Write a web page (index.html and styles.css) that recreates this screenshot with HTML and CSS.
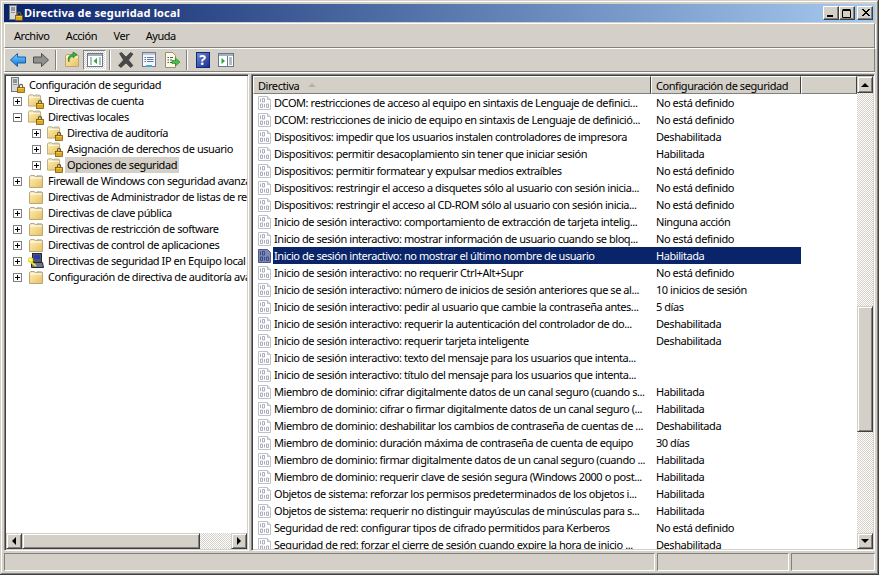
FILE: index.html
```html
<!doctype html>
<html lang="es">
<head>
<meta charset="utf-8">
<title>Directiva de seguridad local</title>
<link rel="stylesheet" href="styles.css">
</head>

<body>
<!--iconos-->
<svg class="defs" width="0" height="0">
	<defs>
		<linearGradient id="g-title" x1="0" y1="0" x2="1" y2="1"><stop offset="0" stop-color="#fff0b8"/><stop offset="1" stop-color="#e8c060"/></linearGradient>
		<linearGradient id="g-back" x1="0" y1="0" x2="0" y2="1"><stop offset="0" stop-color="#7fd0ff"/><stop offset="1" stop-color="#1070d8"/></linearGradient>
		<symbol id="i-folder" viewBox="0 0 16 16">
			<path d="M1.5 14.5V3.5L3 2.5H6L7.5 3.5H14.5V14.5Z" fill="url(#g-title)" stroke="#b8a878"/>
			<path d="M2 5H14" stroke="#fff" />
			<path d="M9 2.5H13.5V3.5H9Z" fill="#e8e0c0" stroke="#a8a8a0" stroke-width=".6"/>
		</symbol>
		<symbol id="i-lock" viewBox="0 0 16 16">
			<path d="M5.5 7V4.5C5.5 1.5 10.5 1.5 10.5 4.5V7" fill="none" stroke="#6c6040" stroke-width="1.8"/>
			<rect x="2.5" y="7" width="11" height="8" fill="#e0a818" stroke="#705008" stroke-width="1.2"/>
			<path d="M4 8.8H12" stroke="#f8e080"/>
		</symbol>
		<symbol id="i-folder-lock" viewBox="0 0 16 16">
			<use href="#i-folder" width="15" height="16" x="-1" y="-1"/>
			<use href="#i-lock" x="7" y="6" width="10" height="10"/>
		</symbol>
		<symbol id="i-server" viewBox="0 0 16 16">
			<rect x="1.5" y="0.5" width="7" height="14" fill="#d8d8d8" stroke="#707880"/>
			<path d="M3 3H7M3 5H7" stroke="#485058"/>
			<rect x="3" y="7" width="4" height="1" fill="#909090"/>
			<use href="#i-lock" x="6" y="6" width="10" height="10"/>
		</symbol>
		<symbol id="i-ipsec" viewBox="0 0 16 16">
			<rect x="4.5" y="0.5" width="9" height="9" fill="#505868" stroke="#202838"/>
			<rect x="6" y="2" width="6" height="4" fill="#2838b8"/>
			<path d="M3.5 9.5H14.5L15.5 14.5H3.5Z" fill="#707888" stroke="#202838"/>
			<path d="M1 7.5L8 13" stroke="#f4e020" stroke-width="2"/>
			<circle cx="2.5" cy="7" r="2" fill="none" stroke="#f4e020" stroke-width="1.4"/>
		</symbol>
		<symbol id="i-doc" viewBox="0 0 16 16">
			<path d="M1.5 1.5H10.5L13.5 4.5V14.5H1.5Z" fill="#fff" stroke="#c0c0c8"/>
			<path d="M10.5 1.5V4.5H13.5" fill="#e0e0e0" stroke="#c0c0c8"/>
			<path d="M3.5 3.5V7M5.5 3.5H7.5V7H5.5ZM3.5 9H5.5V12.5H3.5ZM7.5 9V12.5M9.5 9H11.5V12.5H9.5Z" fill="none" stroke="#a8aebc"/>
		</symbol>
		<symbol id="i-doc-sel" viewBox="0 0 16 16">
			<path d="M1.5 1.5H10.5L13.5 4.5V14.5H1.5Z" fill="#7c88b0" stroke="#4a5a90"/>
			<path d="M3.5 3.5V7M5.5 3.5H7.5V7H5.5ZM3.5 9H5.5V12.5H3.5ZM7.5 9V12.5M9.5 9H11.5V12.5H9.5Z" fill="none" stroke="#384888"/>
		</symbol>
	</defs>
</svg>

<div class="window">
	<!--barra de titulo-->
	<div class="titlebar">
		<svg class="title-icon" width="16" height="16"><use href="#i-server"/></svg>
		<span class="title-text">Directiva de seguridad local</span>
		<div class="caption-btns">
			<button class="caption-btn"><svg width="8" height="8"><rect x="0" y="6" width="6" height="2" fill="#000"/></svg></button>
			<button class="caption-btn"><svg width="10" height="9"><path d="M.5 1.5H8.5V8.5H.5Z M.5 .5H8.5" fill="none" stroke="#000"/></svg></button>
			<button class="caption-btn close"><svg width="9" height="8"><path d="M1 0L8 7M2 0L9 7M8 0L1 7M9 0L2 7" stroke="#000" fill="none"/></svg></button>
		</div>
	</div>

	<!--menu-->
	<div class="menubar">
		<span>Archivo</span>
		<span>Acción</span>
		<span>Ver</span>
		<span>Ayuda</span>
	</div>

	<!--botones-->
	<div class="toolbar">
		<div class="tool"><svg width="16" height="16" viewBox="0 0 16 16"><path d="M.5 8L7.5 1.5V5H15.5V11H7.5V14.5Z" fill="url(#g-back)" stroke="#1060b0"/></svg></div>
		<div class="tool"><svg width="16" height="16" viewBox="0 0 16 16"><path d="M15.5 8L8.5 1.5V5H.5V11H8.5V14.5Z" fill="#909090" stroke="#505050"/></svg></div>
		<div class="tool-sep"></div>
		<div class="tool"><svg width="16" height="16" viewBox="0 0 16 16"><use href="#i-folder"/><path d="M5 10C5 6 7 5 9 4V6L13 2.5L9 0V2C5 3 3 6 5 10Z" fill="#38b030" stroke="#187018" stroke-width=".6"/></svg></div>
		<div class="tool pressed"><svg width="16" height="16" viewBox="0 0 16 16"><rect x=".5" y="1.5" width="15" height="13" fill="#fff" stroke="#68788c"/><rect x="1" y="2" width="14" height="2" fill="#a0b0c0"/><path d="M3 6H5M3 8H5M3 10H5M3 12H5M12 6H14M12 8H14M12 10H14M12 12H14" stroke="#68788c"/><path d="M10 6V12L6.5 9Z" fill="#28a838"/></svg></div>
		<div class="tool-sep"></div>
		<div class="tool"><svg width="16" height="16" viewBox="0 0 16 16"><path d="M1.5 1.5L3.5 .5L8 5L12.5 .5L15 2L10.5 8L15 13.5L12.5 15.5L8 11L3 15.5L.5 13.5L5.5 8Z" fill="#484848" stroke="#303030" stroke-width=".6"/></svg></div>
		<div class="tool"><svg width="16" height="16" viewBox="0 0 16 16"><rect x="1.5" y=".5" width="13" height="14" fill="#f4f6fa" stroke="#707c90"/><rect x="2" y="1" width="12" height="2" fill="#c0c8d8"/><path d="M3.5 5.5H5M6 5.5H12.5M3.5 7.5H5M6 7.5H12.5M3.5 9.5H5M6 9.5H12.5" stroke="#5878a8"/><rect x="5" y="13" width="6" height="2" fill="#40a8e0"/></svg></div>
		<div class="tool"><svg width="16" height="16" viewBox="0 0 16 16"><path d="M1.5 .5H8.5L11.5 3.5V15.5H1.5Z" fill="#fbf8e4" stroke="#989078"/><path d="M3.5 5.5H5M6 5.5H9M3.5 8H5M6 8H8M3.5 10.5H5M6 10.5H8" stroke="#505860"/><path d="M8 8.5H11.5V6L16 10L11.5 14V11.5H8Z" fill="#48c048" stroke="#208030" stroke-width=".6"/></svg></div>
		<div class="tool-sep"></div>
		<div class="tool"><div class="help-mark">?</div></div>
		<div class="tool"><svg width="16" height="16" viewBox="0 0 16 16"><rect x=".5" y="1.5" width="15" height="13" fill="#fff" stroke="#68788c"/><rect x="1" y="2" width="14" height="2" fill="#a0b0c0"/><path d="M11 6H14M11 8H14M11 10H14M11 12H14M9.5 4V14" stroke="#68788c"/><path d="M3.5 6V12L7 9Z" fill="#28a838"/></svg></div>
	</div>

	<div class="panes">
		<!--arbol-->
		<div class="pane tree-pane">
			<div class="tree">
				<div class="node root"><svg width="16" height="16"><use href="#i-server"/></svg><span>Configuración de seguridad</span></div>
				<div class="node"><i class="exp"></i><svg width="16" height="16"><use href="#i-folder-lock"/></svg><span>Directivas de cuenta</span></div>
				<div class="node"><i class="exp open"></i><svg width="16" height="16"><use href="#i-folder-lock"/></svg><span>Directivas locales</span></div>
				<div class="node sub"><i class="exp"></i><svg width="16" height="16"><use href="#i-folder-lock"/></svg><span>Directiva de auditoría</span></div>
				<div class="node sub"><i class="exp"></i><svg width="16" height="16"><use href="#i-folder-lock"/></svg><span>Asignación de derechos de usuario</span></div>
				<div class="node sub current"><i class="exp"></i><svg width="16" height="16"><use href="#i-folder-lock"/></svg><span>Opciones de seguridad</span></div>
				<div class="node"><i class="exp"></i><svg width="16" height="16"><use href="#i-folder"/></svg><span>Firewall de Windows con seguridad avanzada</span></div>
				<div class="node"><i class="exp none"></i><svg width="16" height="16"><use href="#i-folder"/></svg><span>Directivas de Administrador de listas de redes</span></div>
				<div class="node"><i class="exp"></i><svg width="16" height="16"><use href="#i-folder"/></svg><span>Directivas de clave pública</span></div>
				<div class="node"><i class="exp"></i><svg width="16" height="16"><use href="#i-folder"/></svg><span>Directivas de restricción de software</span></div>
				<div class="node"><i class="exp"></i><svg width="16" height="16"><use href="#i-folder"/></svg><span>Directivas de control de aplicaciones</span></div>
				<div class="node"><i class="exp"></i><svg width="16" height="16"><use href="#i-ipsec"/></svg><span>Directivas de seguridad IP en Equipo local</span></div>
				<div class="node"><i class="exp"></i><svg width="16" height="16"><use href="#i-folder"/></svg><span>Configuración de directiva de auditoría avanzada</span></div>
			</div>
			<div class="hscroll">
				<div class="sb-btn"><b class="arrow left"></b></div>
				<div class="sb-thumb hthumb"></div>
				<div class="sb-track"></div>
				<div class="sb-btn"><b class="arrow right"></b></div>
			</div>
		</div>

		<!--lista-->
		<div class="pane list-pane">
			<div class="list">
				<div class="list-head">
					<div class="head-cell col-name">Directiva <b class="sort"></b></div>
					<div class="head-cell col-value">Configuración de seguridad</div>
					<div class="head-cell col-rest"></div>
				</div>
				<div class="row"><svg width="16" height="16"><use href="#i-doc"/></svg><span class="name">DCOM: restricciones de acceso al equipo en sintaxis de Lenguaje de definici...</span><span class="value">No está definido</span></div>
				<div class="row"><svg width="16" height="16"><use href="#i-doc"/></svg><span class="name">DCOM: restricciones de inicio de equipo en sintaxis de Lenguaje de definició...</span><span class="value">No está definido</span></div>
				<div class="row"><svg width="16" height="16"><use href="#i-doc"/></svg><span class="name">Dispositivos: impedir que los usuarios instalen controladores de impresora</span><span class="value">Deshabilitada</span></div>
				<div class="row"><svg width="16" height="16"><use href="#i-doc"/></svg><span class="name">Dispositivos: permitir desacoplamiento sin tener que iniciar sesión</span><span class="value">Habilitada</span></div>
				<div class="row"><svg width="16" height="16"><use href="#i-doc"/></svg><span class="name">Dispositivos: permitir formatear y expulsar medios extraíbles</span><span class="value">No está definido</span></div>
				<div class="row"><svg width="16" height="16"><use href="#i-doc"/></svg><span class="name">Dispositivos: restringir el acceso a disquetes sólo al usuario con sesión inicia...</span><span class="value">No está definido</span></div>
				<div class="row"><svg width="16" height="16"><use href="#i-doc"/></svg><span class="name">Dispositivos: restringir el acceso al CD-ROM sólo al usuario con sesión inicia...</span><span class="value">No está definido</span></div>
				<div class="row"><svg width="16" height="16"><use href="#i-doc"/></svg><span class="name">Inicio de sesión interactivo: comportamiento de extracción de tarjeta intelig...</span><span class="value">Ninguna acción</span></div>
				<div class="row"><svg width="16" height="16"><use href="#i-doc"/></svg><span class="name">Inicio de sesión interactivo: mostrar información de usuario cuando se bloq...</span><span class="value">No está definido</span></div>
				<div class="row selected"><svg width="16" height="16"><use href="#i-doc-sel"/></svg><div class="sel-band"><span class="name">Inicio de sesión interactivo: no mostrar el último nombre de usuario</span><span class="value">Habilitada</span></div></div>
				<div class="row"><svg width="16" height="16"><use href="#i-doc"/></svg><span class="name">Inicio de sesión interactivo: no requerir Ctrl+Alt+Supr</span><span class="value">No está definido</span></div>
				<div class="row"><svg width="16" height="16"><use href="#i-doc"/></svg><span class="name">Inicio de sesión interactivo: número de inicios de sesión anteriores que se al...</span><span class="value">10 inicios de sesión</span></div>
				<div class="row"><svg width="16" height="16"><use href="#i-doc"/></svg><span class="name">Inicio de sesión interactivo: pedir al usuario que cambie la contraseña antes...</span><span class="value">5 días</span></div>
				<div class="row"><svg width="16" height="16"><use href="#i-doc"/></svg><span class="name">Inicio de sesión interactivo: requerir la autenticación del controlador de do...</span><span class="value">Deshabilitada</span></div>
				<div class="row"><svg width="16" height="16"><use href="#i-doc"/></svg><span class="name">Inicio de sesión interactivo: requerir tarjeta inteligente</span><span class="value">Deshabilitada</span></div>
				<div class="row"><svg width="16" height="16"><use href="#i-doc"/></svg><span class="name">Inicio de sesión interactivo: texto del mensaje para los usuarios que intenta...</span><span class="value"></span></div>
				<div class="row"><svg width="16" height="16"><use href="#i-doc"/></svg><span class="name">Inicio de sesión interactivo: título del mensaje para los usuarios que intenta...</span><span class="value"></span></div>
				<div class="row"><svg width="16" height="16"><use href="#i-doc"/></svg><span class="name">Miembro de dominio: cifrar digitalmente datos de un canal seguro (cuando s...</span><span class="value">Habilitada</span></div>
				<div class="row"><svg width="16" height="16"><use href="#i-doc"/></svg><span class="name">Miembro de dominio: cifrar o firmar digitalmente datos de un canal seguro (...</span><span class="value">Habilitada</span></div>
				<div class="row"><svg width="16" height="16"><use href="#i-doc"/></svg><span class="name">Miembro de dominio: deshabilitar los cambios de contraseña de cuentas de ...</span><span class="value">Deshabilitada</span></div>
				<div class="row"><svg width="16" height="16"><use href="#i-doc"/></svg><span class="name">Miembro de dominio: duración máxima de contraseña de cuenta de equipo</span><span class="value">30 días</span></div>
				<div class="row"><svg width="16" height="16"><use href="#i-doc"/></svg><span class="name">Miembro de dominio: firmar digitalmente datos de un canal seguro (cuando ...</span><span class="value">Habilitada</span></div>
				<div class="row"><svg width="16" height="16"><use href="#i-doc"/></svg><span class="name">Miembro de dominio: requerir clave de sesión segura (Windows 2000 o post...</span><span class="value">Habilitada</span></div>
				<div class="row"><svg width="16" height="16"><use href="#i-doc"/></svg><span class="name">Objetos de sistema: reforzar los permisos predeterminados de los objetos i...</span><span class="value">Habilitada</span></div>
				<div class="row"><svg width="16" height="16"><use href="#i-doc"/></svg><span class="name">Objetos de sistema: requerir no distinguir mayúsculas de minúsculas para s...</span><span class="value">Habilitada</span></div>
				<div class="row"><svg width="16" height="16"><use href="#i-doc"/></svg><span class="name">Seguridad de red: configurar tipos de cifrado permitidos para Kerberos</span><span class="value">No está definido</span></div>
				<div class="row"><svg width="16" height="16"><use href="#i-doc"/></svg><span class="name">Seguridad de red: forzar el cierre de sesión cuando expire la hora de inicio ...</span><span class="value">Deshabilitada</span></div>
			</div>
			<div class="vscroll">
				<div class="sb-btn tall"><b class="arrow up"></b></div>
				<div class="sb-track vtop"></div>
				<div class="sb-thumb vthumb"></div>
				<div class="sb-track"></div>
				<div class="sb-btn"><b class="arrow down"></b></div>
			</div>
		</div>
	</div>

	<!--estado-->
	<div class="statusbar">
		<div class="status-cell s1"></div>
		<div class="status-cell s2"></div>
		<div class="status-cell s3"></div>
	</div>
</div>
</body>
</html>
```

FILE: styles.css
```css
html, body {
	margin: 0;
	padding: 0;
}

body {
	font-family: "Noto Sans", "DejaVu Sans", sans-serif;
	font-size: 11px;
	letter-spacing: -0.44px;
	color: #000;
}

.defs {
	display: block;
	height: 0;
}

svg {
	display: block;
	flex: none;
}

.window {
	box-sizing: border-box;
	width: 879px;
	height: 575px;
	padding: 4px;
	display: flex;
	flex-direction: column;
	background: #d4d0c8;
	box-shadow: inset -1px -1px #404040, inset 1px 1px #d4d0c8, inset -2px -2px #808080, inset 2px 2px #fff;
}

/* barra de titulo */
.titlebar {
	height: 18px;
	flex: none;
	padding: 0 2px 0 4px;
	display: flex;
	align-items: center;
	color: #fff;
	background: linear-gradient(to right, #0a246a, #a6caf0);
}

.title-icon {
	margin-top: -1px;
}

.title-text {
	margin-top: -1px;
	font-weight: bold;
	letter-spacing: 0.15px;
	flex: 1;
}

.caption-btns {
	display: flex;
}

.caption-btn {
	box-sizing: border-box;
	width: 16px;
	height: 14px;
	padding: 0;
	display: flex;
	align-items: center;
	justify-content: center;
	background: #d4d0c8;
	border: 1px solid;
	border-color: #fff #404040 #404040 #fff;
	box-shadow: inset -1px -1px #808080;
}

.caption-btn.close {
	margin-left: 2px;
}

/* menu y botones */
.menubar {
	box-sizing: border-box;
	height: 25px;
	flex: none;
	margin-top: 1px;
	padding-left: 9px;
	display: flex;
	align-items: center;
	gap: 16.4px;
	border: 1px solid;
	border-color: #fff #808080 #808080 #fff;
	box-shadow: 1px 1px #fff;
}

.toolbar {
	box-sizing: border-box;
	height: 24px;
	flex: none;
	padding: 1px 0 0 1px;
	display: flex;
	border: 1px solid;
	border-color: #fff #808080 #808080 #fff;
	box-shadow: 0 1px #fff;
}

.tool {
	width: 23px;
	height: 20px;
	display: flex;
	align-items: center;
	justify-content: center;
}

.tool.pressed {
	box-sizing: border-box;
	background: repeating-conic-gradient(#d4d0c8 0 25%, #fff 0 50%) 0 0 / 2px 2px;
	border: 1px solid;
	border-color: #808080 #fff #fff #808080;
}

.tool-sep {
	box-sizing: border-box;
	width: 2px;
	height: 20px;
	margin: 0 3px;
	border-left: 1px solid #808080;
	border-right: 1px solid #fff;
}

.help-mark {
	box-sizing: border-box;
	width: 14px;
	height: 16px;
	line-height: 14px;
	text-align: center;
	font-size: 14px;
	font-weight: bold;
	letter-spacing: 0;
	color: #fff;
	background: linear-gradient(135deg, #6c88d8, #18308c);
	border: 1px solid #102878;
}

/* paneles */
.panes {
	flex: 1;
	min-height: 0;
	margin-top: 2px;
	display: flex;
	gap: 2px;
}

.pane {
	box-sizing: border-box;
	min-height: 0;
	border: 1px solid;
	border-color: #808080 #fff #fff #808080;
	box-shadow: inset 1px 1px #404040, inset -1px -1px #d4d0c8;
	padding: 1px;
	display: flex;
	background: #fff;
}

.tree-pane {
	width: 245px;
	flex-direction: column;
}

.list-pane {
	flex: 1;
}

/* arbol */
.tree {
	flex: 1;
	min-height: 0;
	padding-top: 1px;
	overflow: hidden;
}

.node {
	height: 16px;
	padding-left: 7px;
	display: flex;
	align-items: center;
	white-space: nowrap;
}

.node.root {
	padding-left: 4px;
}

.node.root span {
	margin-left: 1px;
}

.node.sub {
	padding-left: 26px;
}

.node span {
	margin-left: 2px;
	padding: 0 2px;
	line-height: 16px;
}

.node.current span {
	background: #d4d0c8;
}

.exp {
	box-sizing: border-box;
	width: 9px;
	height: 9px;
	margin-right: 6px;
	flex: none;
	border: 1px solid #808080;
	background: linear-gradient(#000, #000) center / 5px 1px no-repeat, linear-gradient(#000, #000) center / 1px 5px no-repeat;
}

.exp.open {
	background: linear-gradient(#000, #000) center / 5px 1px no-repeat;
}

.exp.none {
	border: 0;
	background: none;
}

/* lista */
.list {
	flex: 1;
	min-width: 0;
	overflow: hidden;
}

.list-head {
	height: 18px;
	display: flex;
}

.head-cell {
	box-sizing: border-box;
	height: 18px;
	padding-left: 4px;
	line-height: 17px;
	white-space: nowrap;
	background: #d4d0c8;
	border: 1px solid;
	border-color: #fff #404040 #808080 #fff;
}

.col-name {
	width: 398px;
	display: flex;
	align-items: center;
	gap: 9px;
}

.col-value {
	width: 150px;
}

.col-rest {
	flex: 1;
}

.sort {
	width: 0;
	height: 0;
	border-left: 4px solid transparent;
	border-right: 4px solid transparent;
	border-bottom: 4px solid #b4b0a8;
}

.row {
	height: 17px;
	padding-left: 4px;
	display: flex;
	align-items: center;
	white-space: nowrap;
}

.name {
	box-sizing: border-box;
	width: 382px;
	padding-left: 1px;
	overflow: hidden;
	flex: none;
}

.value {
	margin-left: 1px;
}

.sel-band {
	width: 528px;
	height: 17px;
	line-height: 17px;
	display: flex;
	color: #fff;
	background: #0a246a;
}

/* barras de desplazamiento */
.sb-btn {
	box-sizing: border-box;
	width: 16px;
	height: 16px;
	flex: none;
	display: flex;
	align-items: center;
	justify-content: center;
	background: #d4d0c8;
	border: 1px solid;
	border-color: #d4d0c8 #404040 #404040 #d4d0c8;
	box-shadow: inset 1px 1px #fff, inset -1px -1px #808080;
}

.sb-btn.tall {
	height: 17px;
}

.sb-thumb {
	box-sizing: border-box;
	background: #d4d0c8;
	border: 1px solid;
	border-color: #d4d0c8 #404040 #404040 #d4d0c8;
	box-shadow: inset 1px 1px #fff, inset -1px -1px #808080;
	flex: none;
}

.sb-track {
	flex: 1;
	background: repeating-conic-gradient(#d4d0c8 0 25%, #fff 0 50%) 0 0 / 2px 2px;
}

.hscroll {
	height: 16px;
	flex: none;
	display: flex;
}

.hthumb {
	width: 178px;
}

.vscroll {
	width: 16px;
	flex: none;
	display: flex;
	flex-direction: column;
}

.vtop {
	flex: none;
	height: 213px;
}

.vthumb {
	height: 126px;
}

.arrow {
	width: 0;
	height: 0;
	border: 4px solid transparent;
}

.arrow.up {
	border-top: 0;
	border-bottom-color: #000;
}

.arrow.down {
	border-bottom: 0;
	border-top-color: #000;
}

.arrow.left {
	border-left: 0;
	border-right-color: #000;
}

.arrow.right {
	border-right: 0;
	border-left-color: #000;
}

/* estado */
.statusbar {
	height: 18px;
	flex: none;
	margin-top: 2px;
	display: flex;
	gap: 2px;
}

.status-cell {
	box-sizing: border-box;
	border: 1px solid;
	border-color: #808080 #fff #fff #808080;
}

.s1 {
	width: 651px;
}

.s2 {
	width: 132px;
}

.s3 {
	flex: 1;
}
```
